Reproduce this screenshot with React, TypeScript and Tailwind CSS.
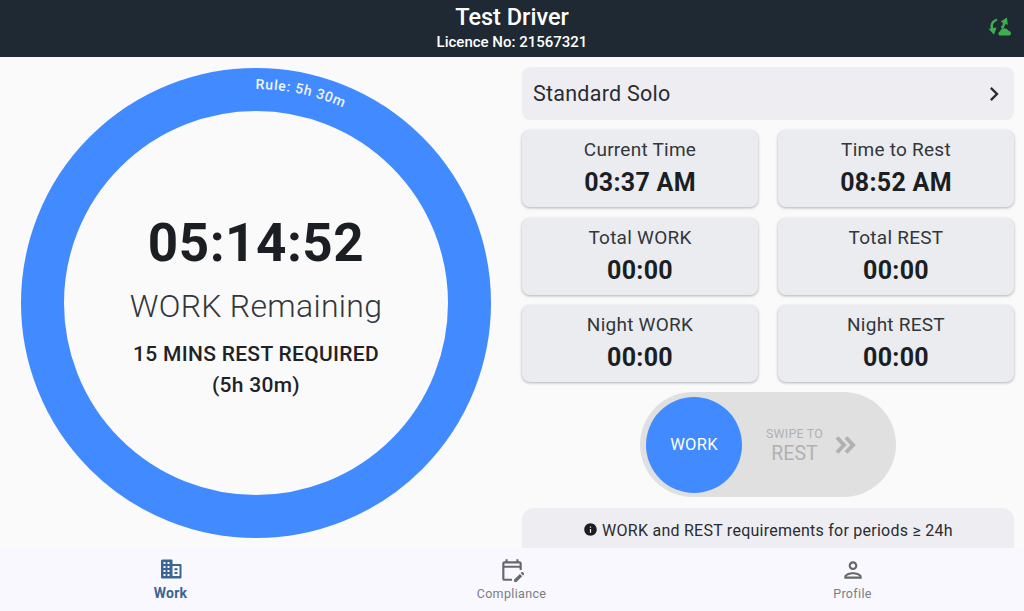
import { MdChevronRight, MdInfo, MdOutlineEditCalendar, MdOutlinePerson } from "react-icons/md";

const CARDS = [
  { label: "Current Time", value: "03:37 AM" },
  { label: "Time to Rest", value: "08:52 AM" },
  { label: "Total WORK", value: "00:00" },
  { label: "Total REST", value: "00:00" },
  { label: "Night WORK", value: "00:00" },
  { label: "Night REST", value: "00:00" },
];

function SyncIcon() {
  return (
    <svg width="24" height="24" viewBox="0 0 24 24" fill="none" className="text-[#3fae4e]">
      <path d="M9 3.5C4.5 5.5 2.5 9 4.2 13.5" stroke="currentColor" strokeWidth="2.4" />
      <path d="M0.6 12.8L8.6 11.6L6 18.8Z" fill="currentColor" />
      <path d="M13.5 12C15.5 10.5 16.5 8.5 16 6" stroke="currentColor" strokeWidth="2.4" />
      <path d="M12.6 5.6L19 1.6L19.8 9Z" fill="currentColor" />
      <path d="M12.5 19.5C10 19.5 9.6 16 12 15.4C13 11.2 19.2 11.2 20.4 14.8C23.6 15.2 24 19.5 21 19.5Z" fill="currentColor" />
    </svg>
  );
}

function WorkIcon() {
  return (
    <svg width="24" height="24" viewBox="0 0 24 24" className="text-[#3b6593]">
      <path
        fill="currentColor"
        fillRule="evenodd"
        d="M3.5 2.5H12.5A1 1 0 0 1 13.5 3.5V7H21.5A1 1 0 0 1 22.5 8V20.5A1 1 0 0 1 21.5 21.5H3A1 1 0 0 1 2 20.5V4A1.5 1.5 0 0 1 3.5 2.5ZM4.5 5V7H6.5V5ZM8.5 5V7H10.5V5ZM4.5 9V11H6.5V9ZM8.5 9V11H10.5V9ZM4.5 13V15H6.5V13ZM8.5 13V15H10.5V13ZM4.5 17V19H6.5V17ZM8.5 17V19H10.5V17ZM13.5 9V19H20.5V9ZM15.5 11.2H18.5V13.2H15.5ZM15.5 15H18.5V17H15.5Z"
      />
    </svg>
  );
}

function StatCard({ label, value }: { label: string; value: string }) {
  return (
    <div className="flex h-[77px] flex-col items-center rounded-lg bg-[#eaecf0] pt-[7px] shadow-[0_1px_3px_rgba(0,0,0,0.3)]">
      <div className="text-[19px] leading-[26px] tracking-[0.25px] text-[#33363b]">{label}</div>
      <div className="mt-[4px] text-[25px] leading-[32px] font-bold tracking-[0.3px] text-[#1b1e23]">{value}</div>
    </div>
  );
}

function NavItem({ label, icon, active }: { label: string; icon: React.ReactNode; active?: boolean }) {
  return (
    <div className="flex w-[341px] flex-col items-center pt-[9px]">
      <div className={active ? "text-[#3b6593]" : "text-[#66686e]"}>{icon}</div>
      <div
        className={
          active
            ? "mt-[2px] text-[14px] leading-[20px] font-bold tracking-[0.2px] text-[#3b6593]"
            : "mt-[1px] text-[12.5px] leading-[20px] tracking-[0.35px] text-[#7b7d83]"
        }
      >
        {label}
      </div>
    </div>
  );
}

export default function App() {
  return (
    <div className="flex h-[611px] w-[1024px] flex-col overflow-hidden bg-[#fafafa] font-['Roboto',sans-serif]">
      <header className="relative flex h-[57px] shrink-0 flex-col items-center bg-[#1f2933] pt-[3px] text-white">
        <div className="text-[23.5px] leading-[28px] font-medium">Test Driver</div>
        <div className="mt-[1px] text-[15px] leading-[20px] font-medium">Licence No: 21567321</div>
        <div className="absolute top-[16px] right-[12px]">
          <SyncIcon />
        </div>
      </header>

      <main className="flex min-h-0 flex-1 overflow-hidden">
        <section className="flex w-[512px] shrink-0 justify-center pt-[11px]">
          <div className="relative flex h-[470px] w-[470px] flex-col items-center rounded-full border-[43px] border-[#418aff] pt-[100px]">
            <div className="text-[53px] leading-[64px] font-bold tracking-[0.5px] text-[#1b1e23]">05:14:52</div>
            <div className="mt-[10px] text-[32px] leading-[42px] font-light tracking-[0.3px] text-[#33363b]">
              WORK Remaining
            </div>
            <div className="mt-[12px] text-center text-[21px] leading-[31px] font-medium tracking-[0.3px] text-[#1f2227]">
              15 MINS REST REQUIRED
              <br />
              (5h 30m)
            </div>
            <svg width="470" height="470" viewBox="0 0 470 470" className="absolute top-[-43px] left-[-43px]">
              <defs>
                <path id="rule-arc" d="M 21 235 A 214 214 0 0 1 449 235" />
              </defs>
              <text fill="#f0f5ff" fontSize="14" fontWeight="500" letterSpacing="0.7" fontFamily="Roboto">
                <textPath href="#rule-arc" startOffset="56.7%" textAnchor="middle">
                  Rule: 5h 30m
                </textPath>
              </text>
            </svg>
          </div>
        </section>

        <section className="ml-[10px] flex w-[492px] shrink-0 flex-col pt-[10px]">
          <div className="flex h-[53px] shrink-0 items-center justify-between rounded-lg bg-[#eeeef2] pr-[6px] pl-[11px] pt-[1px]">
            <span className="text-[21.5px] tracking-[0.25px] text-[#2a2c31]">Standard Solo</span>
            <MdChevronRight size={28} className="text-[#2a2c31]" />
          </div>
          <div className="mt-[10px] grid shrink-0 grid-cols-2 gap-x-[20px] gap-y-[10.5px]">
            {CARDS.map((c) => (
              <StatCard key={c.label} label={c.label} value={c.value} />
            ))}
          </div>
          <div className="mt-[10px] flex h-[105px] w-[256px] shrink-0 items-center self-center rounded-full bg-[#e0e0e0] pl-[6px]">
            <div className="flex h-[96px] w-[96px] items-center justify-center rounded-full bg-[#418aff] pt-[1px] text-[16.5px] tracking-[0.3px] text-white">
              WORK
            </div>
            <div className="ml-[23px] flex w-[59px] flex-col items-center pt-[2px] text-[#b1b1b1]">
              <div className="text-[12.5px] leading-[16px] tracking-[0.2px] whitespace-nowrap">SWIPE TO</div>
              <div className="text-[19.5px] leading-[24px]">REST</div>
            </div>
            <svg width="24" height="24" viewBox="0 0 24 24" fill="none" className="ml-[9px]">
              <path d="M4 4.5L11 12L4 19.5M13 4.5L20 12L13 19.5" stroke="#b1b1b1" strokeWidth="4" />
            </svg>
          </div>
          <div className="mt-[11px] flex h-[60px] shrink-0 items-start justify-center rounded-t-xl bg-[#eeeef2] pt-[11px] text-[16px] tracking-[0.25px] text-[#2a2c31]">
            <MdInfo size={15} className="mt-[3px] mr-[4px] text-[#1b1e23]" />
            WORK and REST requirements for periods ≥ 24h
          </div>
        </section>
      </main>

      <nav className="relative flex h-[63px] shrink-0 bg-[#f8f8fe]">
        <NavItem label="Work" active icon={<WorkIcon />} />
        <NavItem label="Compliance" icon={<MdOutlineEditCalendar size={26} />} />
        <NavItem label="Profile" icon={<MdOutlinePerson size={26} />} />
      </nav>
    </div>
  );
}
